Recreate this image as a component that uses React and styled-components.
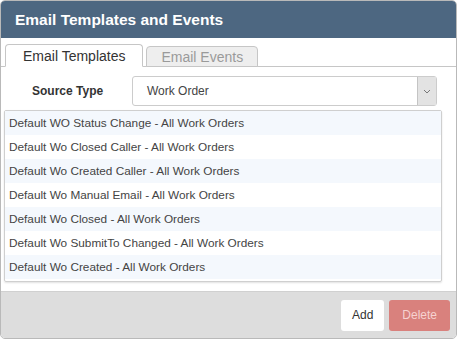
import React, { useState } from 'react';
import styled, { createGlobalStyle } from 'styled-components';

const GlobalStyle = createGlobalStyle`
  html, body {
    margin: 0;
    padding: 0;
    background: #ffffff;
    font-family: "Liberation Sans", Arial, sans-serif;
  }
`;

const Panel = styled.div`
  width: 455px;
  height: 337px;
  border: 1px solid #b9b9b9;
  border-radius: 5px;
  overflow: hidden;
  display: flex;
  flex-direction: column;
  background: #ffffff;
`;

const Header = styled.div`
  height: 37px;
  background: #4d6781;
  color: #ffffff;
  font-size: 15.5px;
  font-weight: bold;
  padding: 0 14px;
  display: flex;
  align-items: center;
  box-sizing: border-box;
`;

const Body = styled.div`
  flex: 1;
  display: flex;
  flex-direction: column;
`;

const TabBar = styled.div`
  display: flex;
  align-items: flex-end;
  gap: 3px;
  padding: 6px 0 0 4px;
  border-bottom: 1px solid #c6c6c6;
  height: 29px;
  box-sizing: border-box;
`;

const Tab = styled.button`
  font-family: inherit;
  font-size: 14px;
  height: ${p => (p.$active ? '23px' : '21px')};
  padding: 0 ${p => (p.$active ? '17px' : '14px')};
  margin-bottom: -1px;
  border: 1px solid #c6c6c6;
  border-bottom: 1px solid ${p => (p.$active ? '#ffffff' : '#c6c6c6')};
  border-radius: 4px 4px 0 0;
  background: ${p => (p.$active ? '#ffffff' : '#eeeeee')};
  color: ${p => (p.$active ? '#333333' : '#9a9a9a')};
  cursor: pointer;
  line-height: 1;
`;

const FormRow = styled.div`
  display: flex;
  align-items: center;
  padding: 9px 19px 0 31px;
  height: 30px;
`;

const Label = styled.div`
  width: 100px;
  font-size: 12px;
  font-weight: bold;
  color: #333333;
`;

const Select = styled.div`
  flex: 1;
  height: 30px;
  border: 1px solid #cccccc;
  border-radius: 3px;
  display: flex;
  align-items: stretch;
  box-sizing: border-box;
  font-size: 12px;
  color: #444444;
`;

const SelectValue = styled.div`
  flex: 1;
  display: flex;
  align-items: center;
  padding-left: 14px;
`;

const Caret = styled.div`
  width: 18px;
  background: #e3e3e3;
  border-left: 1px solid #c4c4c4;
  display: flex;
  align-items: center;
  justify-content: center;
`;

const List = styled.div`
  margin: 4px 14px 0 3px;
  border: 1px solid #cfcfcf;
  border-radius: 2px;
  box-shadow: 0 1px 2px rgba(0, 0, 0, 0.12);
  padding-bottom: 2px;
`;

const Item = styled.div`
  height: 24px;
  display: flex;
  align-items: center;
  padding-left: 4px;
  font-size: 11.8px;
  color: #444444;
  background: ${p => (p.$odd ? '#ffffff' : '#f4f8fd')};
`;

const Footer = styled.div`
  margin-top: auto;
  height: 47px;
  background: #dddddd;
  border-top: 1px solid #d0d0d0;
  display: flex;
  justify-content: flex-end;
  align-items: center;
  gap: 5px;
  padding: 0 6px 0 0;
  box-sizing: border-box;
`;

const Button = styled.button`
  font-family: inherit;
  font-size: 12px;
  height: 31px;
  padding: 0 ${p => (p.$danger ? '13px' : '11px')};
  border: none;
  border-radius: 3px;
  background: ${p => (p.$danger ? '#d9817d' : '#ffffff')};
  color: ${p => (p.$danger ? '#f6d2d0' : '#333333')};
`;

const templates = [
  'Default WO Status Change - All Work Orders',
  'Default Wo Closed Caller - All Work Orders',
  'Default Wo Created Caller - All Work Orders',
  'Default Wo Manual Email - All Work Orders',
  'Default Wo Closed - All Work Orders',
  'Default Wo SubmitTo Changed - All Work Orders',
  'Default Wo Created - All Work Orders',
];

export default function App() {
  const [tab, setTab] = useState('templates');
  return (
    <>
      <GlobalStyle />
      <Panel>
        <Header>Email Templates and Events</Header>
        <Body>
          <TabBar>
            <Tab $active={tab === 'templates'} onClick={() => setTab('templates')}>
              Email Templates
            </Tab>
            <Tab $active={tab === 'events'} onClick={() => setTab('events')}>
              Email Events
            </Tab>
          </TabBar>
          <FormRow>
            <Label>Source Type</Label>
            <Select>
              <SelectValue>Work Order</SelectValue>
              <Caret>
                <svg width="8" height="5" viewBox="0 0 8 5">
                  <path d="M1 1 L4 4 L7 1" fill="none" stroke="#777" strokeWidth="1" />
                </svg>
              </Caret>
            </Select>
          </FormRow>
          <List>
            {templates.map((t, i) => (
              <Item key={t} $odd={i % 2 === 1}>{t}</Item>
            ))}
          </List>
        </Body>
        <Footer>
          <Button>Add</Button>
          <Button $danger>Delete</Button>
        </Footer>
      </Panel>
    </>
  );
}
